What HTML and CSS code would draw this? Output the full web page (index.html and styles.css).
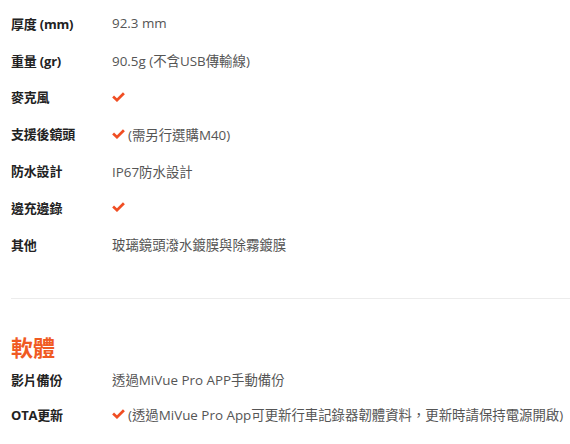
FILE: index.html
```html
<!DOCTYPE html>
<html lang="zh-Hant">
<head>
<meta charset="utf-8">
<link rel="stylesheet" href="styles.css">
</head>
<body>
<div class="page">
  <dl class="specs">
    <div class="row"><dt>厚度 (mm)</dt><dd>92.3 mm</dd></div>
    <div class="row"><dt>重量 (gr)</dt><dd>90.5g (不含USB傳輸線)</dd></div>
    <div class="row"><dt>麥克風</dt><dd><svg class="check" viewBox="0 0 12 9"><path d="M1 4 L4.6 7.4 L11 1"/></svg></dd></div>
    <div class="row"><dt>支援後鏡頭</dt><dd><svg class="check" viewBox="0 0 12 9"><path d="M1 4 L4.6 7.4 L11 1"/></svg>(需另行選購M40)</dd></div>
    <div class="row"><dt>防水設計</dt><dd>IP67防水設計</dd></div>
    <div class="row"><dt>邊充邊錄</dt><dd><svg class="check" viewBox="0 0 12 9"><path d="M1 4 L4.6 7.4 L11 1"/></svg></dd></div>
    <div class="row"><dt>其他</dt><dd>玻璃鏡頭潑水鍍膜與除霧鍍膜</dd></div>
  </dl>
  <hr class="divider">
  <h2 class="section-title">軟體</h2>
  <dl class="specs specs-sw">
    <div class="row"><dt>影片備份</dt><dd>透過MiVue Pro APP手動備份</dd></div>
    <div class="row"><dt>OTA更新</dt><dd><svg class="check" viewBox="0 0 12 9"><path d="M1 4 L4.6 7.4 L11 1"/></svg>(透過MiVue Pro App可更新行車記錄器韌體資料，更新時請保持電源開啟)</dd></div>
  </dl>
</div>
</body>
</html>
```

FILE: styles.css
```css
html, body {
  margin: 0;
  padding: 0;
  background: #fff;
}
body {
  font-family: "Open Sans", "Noto Sans CJK TC", sans-serif;
  font-size: 13px;
  color: #555;
}
.page {
  padding: 5px 0 0 11px;
}
.specs {
  margin: 0;
  display: flex;
  flex-direction: column;
}
.row {
  display: flex;
  align-items: center;
  height: 36.8px;
}
dt {
  width: 101px;
  flex: none;
  font-weight: 700;
  color: #222;
  letter-spacing: -0.2px;
}
dd {
  margin: 0;
  display: flex;
  align-items: center;
  white-space: nowrap;
  font-size: 13.4px;
}
.check {
  width: 13px;
  height: 10px;
  margin-right: 3px;
  fill: none;
  stroke: #f04e23;
  stroke-width: 2.5;
  stroke-linecap: butt;
}
.divider {
  border: 0;
  border-top: 1px solid #ececec;
  margin: 35px 0 0 0;
}
.section-title {
  margin: 33px 0 0 0;
  font-size: 22px;
  font-weight: 700;
  color: #f05a22;
  line-height: 30px;
}
.specs-sw .row {
  height: 35px;
}
```
